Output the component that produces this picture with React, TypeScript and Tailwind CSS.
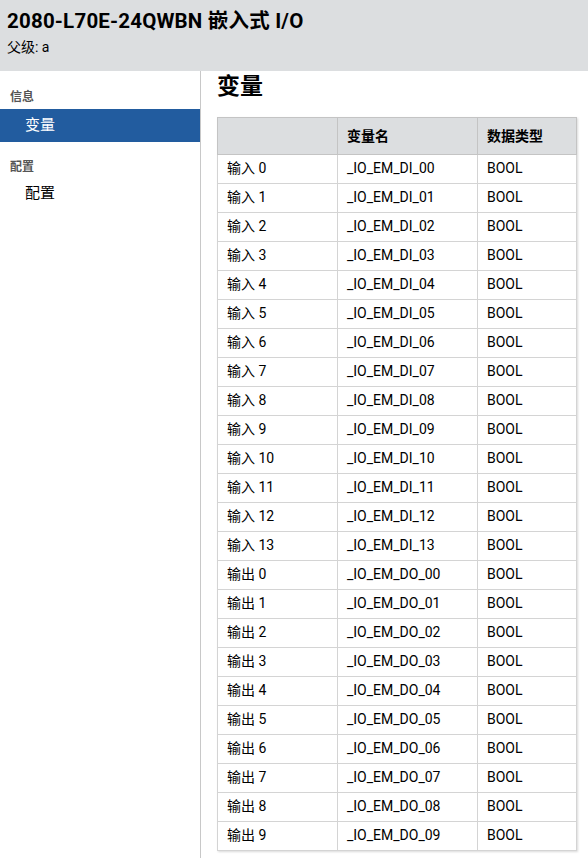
const rows: [string, string][] = [
  ...Array.from({ length: 14 }, (_, i) => [
    `输入 ${i}`,
    `_IO_EM_DI_${String(i).padStart(2, "0")}`,
  ] as [string, string]),
  ...Array.from({ length: 10 }, (_, i) => [
    `输出 ${i}`,
    `_IO_EM_DO_${String(i).padStart(2, "0")}`,
  ] as [string, string]),
];

export default function App() {
  return (
    <div className="flex h-[858px] flex-col overflow-hidden bg-white font-['Roboto','Noto_Sans_CJK_SC',sans-serif] text-black">
      {/* 页眉 */}
      <header className="h-[71px] shrink-0 bg-[#dcdee0] px-[7px] pt-[8px]">
        <h1 className="text-[20.5px] font-bold leading-[26px] tracking-[0.2px]">2080-L70E-24QWBN 嵌入式 I/O</h1>
        <div className="mt-[5px] text-[14px] leading-[17px]">父级: a</div>
      </header>

      <div className="flex min-h-0 flex-1">
        {/* 侧栏 */}
        <nav className="w-[201px] shrink-0 border-r border-[#c8c8c8] pt-[19px]">
          <div className="px-[10px] text-[12px] font-bold leading-[14px] text-[#555]">信息</div>
          <div className="mt-[5px] flex h-[33px] items-center bg-[#225c9f] pl-[25px] text-[15px] text-white">
            变量
          </div>
          <div className="mt-[18px] px-[10px] text-[12px] font-bold leading-[14px] text-[#555]">配置</div>
          <div className="mt-[3px] flex h-[33px] items-center pl-[25px] text-[15px]">配置</div>
        </nav>

        {/* 主内容 */}
        <main className="flex-1 pl-[16px] pr-[12px]">
          <h2 className="pt-[1px] text-[23px] font-bold leading-[30px]">变量</h2>
          <table className="mt-[15px] w-[360px] border-collapse border border-[#c4c4c4] text-[14px] shadow-[1px_1px_2px_rgba(0,0,0,0.15)]">
            <thead>
              <tr className="h-[37px] bg-[#dcdee0] text-left font-bold">
                <th className="w-[120px] border border-[#c4c4c4] px-[9px]"></th>
                <th className="w-[140px] border border-[#c4c4c4] px-[9px]">变量名</th>
                <th className="border border-[#c4c4c4] px-[9px]">数据类型</th>
              </tr>
            </thead>
            <tbody>
              {rows.map(([label, name]) => (
                <tr key={name} className="h-[29px]">
                  <td className="border border-[#d4d4d4] px-[9px] pb-[1px]">{label}</td>
                  <td className="border border-[#d4d4d4] px-[9px] pb-[1px]">{name}</td>
                  <td className="border border-[#d4d4d4] px-[9px] pb-[1px]">BOOL</td>
                </tr>
              ))}
            </tbody>
          </table>
        </main>
      </div>
    </div>
  );
}
